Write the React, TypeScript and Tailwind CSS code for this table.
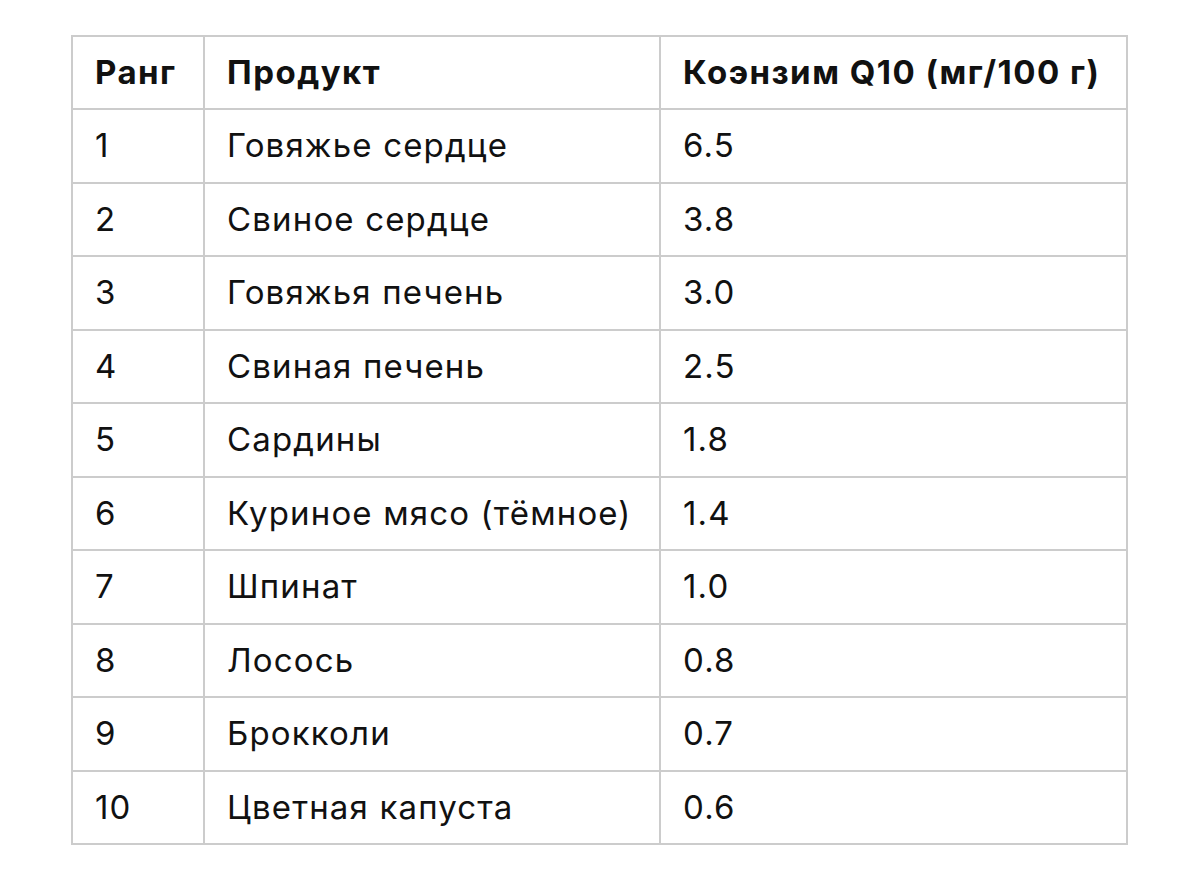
import React from "react";

const rows: [string, string, string][] = [
  ["1", "Говяжье сердце", "6.5"],
  ["2", "Свиное сердце", "3.8"],
  ["3", "Говяжья печень", "3.0"],
  ["4", "Свиная печень", "2.5"],
  ["5", "Сардины", "1.8"],
  ["6", "Куриное мясо (тёмное)", "1.4"],
  ["7", "Шпинат", "1.0"],
  ["8", "Лосось", "0.8"],
  ["9", "Брокколи", "0.7"],
  ["10", "Цветная капуста", "0.6"],
];

export default function App() {
  return (
    <div className="w-[1200px] h-[887px] bg-white pt-[35px] pl-[71px]" style={{ fontFamily: "Inter, 'Noto Sans', sans-serif" }}>
      <table className="border-collapse text-[33px] tracking-[0.035em] text-[#111]">
        <thead>
          <tr className="h-[73px] tracking-[0.045em]">
            <th className="w-[132px] border-2 border-[#cccccc] text-left font-bold pl-[22px] align-middle">Ранг</th>
            <th className="w-[456px] border-2 border-[#cccccc] text-left font-bold pl-[22px] align-middle">Продукт</th>
            <th className="w-[467px] border-2 border-[#cccccc] text-left font-bold pl-[22px] align-middle">Коэнзим Q10 (мг/100 г)</th>
          </tr>
        </thead>
        <tbody>
          {rows.map((r) => (
            <tr key={r[0]} className="h-[73.5px]">
              <td className="border-2 border-[#cccccc] pl-[22px] align-middle">{r[0]}</td>
              <td className="border-2 border-[#cccccc] pl-[22px] align-middle">{r[1]}</td>
              <td className="border-2 border-[#cccccc] pl-[22px] align-middle">{r[2]}</td>
            </tr>
          ))}
        </tbody>
      </table>
    </div>
  );
}
